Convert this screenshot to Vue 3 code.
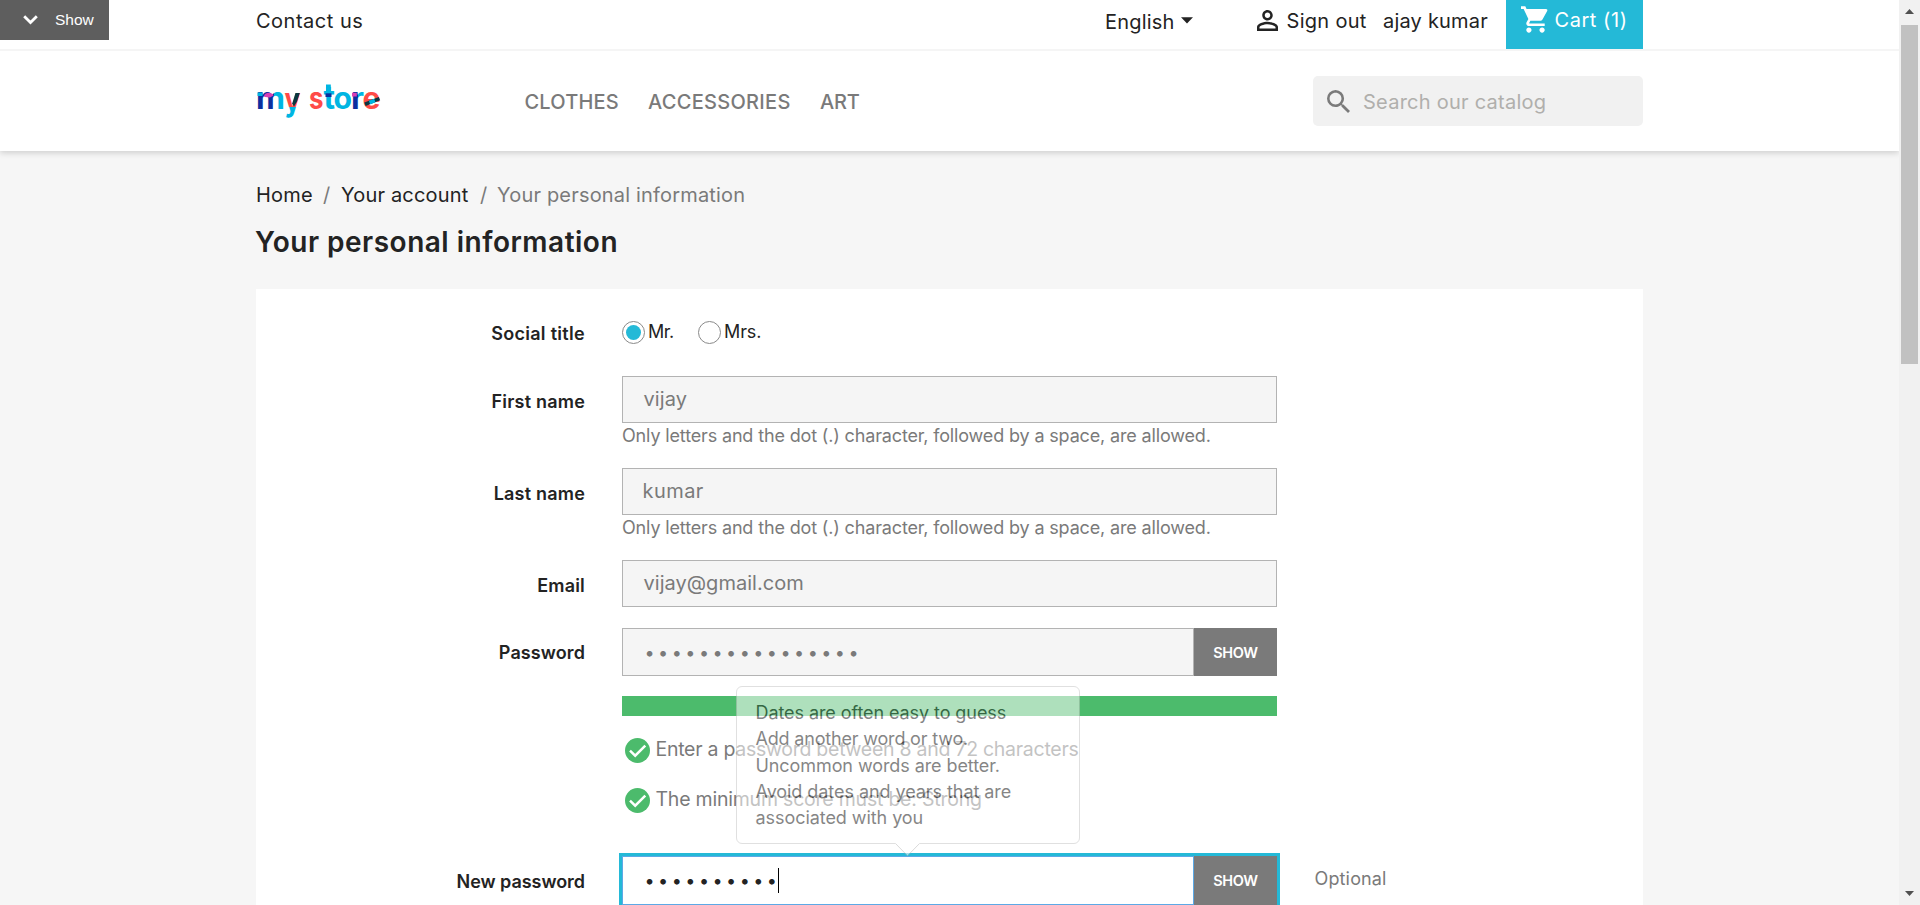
<script setup>
const nav = [
  { text: 'CLOTHES', cls: 'n1' },
  { text: 'ACCESSORIES', cls: 'n2' },
  { text: 'ART', cls: 'n3' }
]
const hint = 'Only letters and the dot (.) character, followed by a space, are allowed.'
const rules = [
  { text: 'Enter a password between 8 and 72 characters', cls: 'r1' },
  { text: 'The minimum score must be: Strong', cls: 'r2' }
]
const tips = [
  { text: 'Dates are often easy to guess', cls: 'p1' },
  { text: 'Add another word or two.', cls: 'p2' },
  { text: 'Uncommon words are better.', cls: 'p1' },
  { text: 'Avoid dates and years that are', cls: 'p3' },
  { text: 'associated with you', cls: 'p3' }
]
</script>

<template>
  <div class="window">
    <div class="page">
      <div class="toggle">
        <svg width="15" height="10" viewBox="0 0 15 10"><path d="M1.2 1.2 7.5 7.5 13.8 1.2" fill="none" stroke="#fff" stroke-width="2.8" /></svg>
        <span>Show</span>
      </div>

      <header class="header">
        <div class="topbar">
          <div class="wrap topnav">
            <a class="contact">Contact us</a>
            <a class="lang">English</a>
            <svg class="caret" width="12" height="7" viewBox="0 0 12 7"><path d="M0 0.3H12L6 6.5Z" fill="#232323" /></svg>
            <svg class="person" width="21" height="21" viewBox="4 4 16 16"><path fill="#232323" d="M12 5.9c1.16 0 2.1.94 2.1 2.1s-.94 2.1-2.1 2.1S9.900 9.160 9.900 8s.94-2.100 2.100-2.100m0 9c2.970 0 6.100 1.460 6.100 2.100v1.100H5.900V17c0-.64 3.130-2.100 6.100-2.100M12 4C9.790 4 8 5.790 8 8s1.790 4 4 4 4-1.790 4-4-1.790-4-4-4zm0 9c-2.670 0-8 1.340-8 4v3h16v-3c0-2.660-5.330-4-8-4z" /></svg>
            <a class="signout">Sign out</a>
            <a class="user">ajay kumar</a>
            <div class="cart">
              <svg width="27" height="27" viewBox="1 2 20.500 20"><path fill="#fff" d="M7 18c-1.100 0-1.990.9-1.990 2S5.900 22 7 22s2-.9 2-2-.9-2-2-2zM1 2v2h2l3.600 7.590-1.350 2.450c-.16.28-.25.61-.25.96 0 1.100.9 2 2 2h12v-2H7.420c-.14 0-.25-.11-.25-.25l.03-.12.900-1.630h7.450c.75 0 1.410-.41 1.750-1.030l3.580-6.490A1 1 0 0 0 20 4H5.210l-.94-2H1zm16 16c-1.100 0-1.990.9-1.990 2s.890 2 1.990 2 2-.9 2-2-.9-2-2-2z" /></svg>
              <span>Cart (1)</span>
            </div>
          </div>
        </div>
        <div class="wrap mainbar">
          <svg class="logo" width="126" height="40" viewBox="0 0 126 40" role="img" aria-label="my store">
            <defs>
              <linearGradient id="gm" x1="0" x2="1" y1="0" y2="0">
                <stop offset=".62" stop-color="#0b2f9f" /><stop offset=".62" stop-color="#00b5e2" />
              </linearGradient>
              <linearGradient id="gy" x1="0" x2="0" y1="0" y2="1">
                <stop offset=".7" stop-color="#ff4b47" /><stop offset=".7" stop-color="#00b5e2" />
              </linearGradient>
              <linearGradient id="gr" x1="0" x2="1" y1="0" y2="0">
                <stop offset=".52" stop-color="#0b2f9f" /><stop offset=".52" stop-color="#00b5e2" />
              </linearGradient>
            </defs>
            <g class="mark">
              <text x="0" y="27" textLength="29" lengthAdjust="spacingAndGlyphs" fill="url(#gm)">m</text>
              <text class="big" x="28.500" y="28.500" textLength="16" lengthAdjust="spacingAndGlyphs" fill="url(#gy)">y</text>
              <text x="53" y="27" textLength="14.500" lengthAdjust="spacingAndGlyphs" fill="#ff4b47">s</text>
              <text class="big" x="67.500" y="27" textLength="11.500" lengthAdjust="spacingAndGlyphs" fill="#00b5e2">t</text>
              <text x="77.500" y="27" textLength="18.500" lengthAdjust="spacingAndGlyphs" fill="#00b5e2">o</text>
              <text x="95" y="27" textLength="13" lengthAdjust="spacingAndGlyphs" fill="url(#gr)">r</text>
              <text x="106.500" y="27" textLength="18" lengthAdjust="spacingAndGlyphs" fill="#ff4b47">e</text>
            </g>
            <path d="M8 14.500C8 10 16 9.500 17.500 13.500L14 15.500 9 15z" fill="#d93fb5" />
            <path d="M1.500 10.500h5v3.500h-5z" fill="#00b5e2" />
            <path d="M39.500 11h4.300L41 19.500 38 24.500 36.200 21.500z" fill="#0a3640" />
            <path d="M70 2.500h4.800v8h-4.800z" fill="#00b5e2" />
            <path d="M69.500 11.300h6v3.700h-6z" fill="#0b2f9f" />
            <path d="M96 10.800h4.800v3.700H96z" fill="#d93fb5" />
            <path d="M109 22.300 123.500 16.600" stroke="#0a3640" stroke-width="3.600" />
            <path d="M113.500 20.500 118.800 18.500" stroke="#00b5e2" stroke-width="3.600" />
          </svg>
          <nav class="menu"><a v-for="n in nav" :key="n.text" :class="n.cls">{{ n.text }}</a></nav>
          <div class="search">
            <svg width="23" height="23" viewBox="3 3 17.500 17.500"><path fill="#7a7a7a" d="M15.500 14h-.79l-.28-.27A6.471 6.471 0 0 0 16 9.500 6.500 6.500 0 1 0 9.500 16c1.610 0 3.090-.59 4.230-1.570l.27.28v.79l5 4.990L20.490 19l-4.990-5zm-6 0C7.010 14 5 11.990 5 9.500S7.010 5 9.500 5 14 7.010 14 9.500 11.990 14 9.500 14z" /></svg>
            <span>Search our catalog</span>
          </div>
        </div>
      </header>

      <main class="wrap">
        <div class="crumbs">
          <a class="c1">Home</a><i>/</i><a class="c2">Your account</a><i class="s2">/</i><span>Your personal information</span>
        </div>
        <h1>Your personal information</h1>

        <section class="panel">
          <div class="row social">
            <label class="l1">Social title</label>
            <div class="radios">
              <span class="radio on"></span><span class="mr">Mr.</span>
              <span class="radio"></span><span class="mrs">Mrs.</span>
            </div>
          </div>
          <div class="row tall">
            <label>First name</label>
            <div class="field"><div class="input">vijay</div><p class="hint">{{ hint }}</p></div>
          </div>
          <div class="row tall">
            <label>Last name</label>
            <div class="field"><div class="input kumar">kumar</div><p class="hint">{{ hint }}</p></div>
          </div>
          <div class="row mail">
            <label>Email</label>
            <div class="field"><div class="input email">vijay@gmail.com</div></div>
          </div>
          <div class="row pass">
            <label class="l5">Password</label>
            <div class="field">
              <div class="group"><div class="input dots">••••••••••••••••</div><button class="show">SHOW</button></div>
              <div class="meter"></div>
              <div v-for="r in rules" :key="r.text" class="rule">
                <svg width="25" height="25" viewBox="0 0 25 25"><circle cx="12.500" cy="12.500" r="12.500" fill="#4cbb6c" /><path d="M5 12.700 10.200 17.700 20.300 7.700" fill="none" stroke="#fff" stroke-width="2.500" /></svg>
                <span :class="r.cls">{{ r.text }}</span>
              </div>
            </div>
          </div>
          <div class="row last">
            <label class="l6">New password</label>
            <div class="field">
              <div class="group focus">
                <div class="input dots">••••••••••<span class="cursor"></span></div><button class="show">SHOW</button>
              </div>
              <div class="popover">
                <div v-for="t in tips" :key="t.text" class="tip" :class="t.cls">{{ t.text }}</div>
                <svg class="arrow" width="25" height="14" viewBox="0 0 25 14"><path d="M0 0 12.500 12.500 25 0" fill="#fff" /><path d="M0.500 0.500 12.500 12.800 24.500 0.500" fill="none" stroke="#bdbdbd" /></svg>
              </div>
            </div>
            <span class="optional">Optional</span>
          </div>
        </section>
      </main>
    </div>

    <div class="scrollbar">
      <svg width="9" height="5" viewBox="0 0 9 5"><path d="M0 5 4.500 0 9 5Z" fill="#505050" /></svg>
      <div class="thumb"></div>
      <svg class="down" width="9" height="5" viewBox="0 0 9 5"><path d="M0 0 4.500 5 9 0Z" fill="#505050" /></svg>
    </div>
  </div>
</template>

<style>
body { margin: 0; overflow: hidden; }
</style>

<style scoped>
* { box-sizing: border-box; }
.window { display: flex; width: 1920px; height: 905px; overflow: hidden; background: #f6f6f6; font-family: Inter, "Noto Sans", sans-serif; font-weight: 400; font-size: 20px; color: #232323; white-space: nowrap; }
.page { position: relative; width: 1899px; height: 905px; overflow: hidden; }
.wrap { width: 1387px; margin-left: 256px; }
.toggle { position: absolute; left: 0; top: 0; z-index: 2; display: flex; align-items: center; width: 109px; height: 40px; padding-left: 23px; background: #5e5e5e; color: #fff; font: 400 15.500px "Liberation Sans", sans-serif; }
.toggle span { margin: -1px 0 0 17px; }

.header { height: 151px; background: #fff; box-shadow: 0 2px 6px rgba(0, 0, 0, .16); position: relative; }
.topbar { height: 51px; border-bottom: 2px solid #f5f5f5; }
.topnav { display: flex; align-items: flex-start; height: 49px; line-height: 25px; }
.contact { width: 849px; margin-top: 9px; letter-spacing: .5px; }
.lang { width: 76px; margin-top: 10px; letter-spacing: .2px; }
.caret { margin-top: 17px; }
.person { margin: 9.500px 9px 0 63.500px; }
.signout { width: 96.500px; margin-top: 9px; letter-spacing: .3px; }
.user { width: 122.500px; margin-top: 9px; letter-spacing: .2px; }
.cart { display: flex; width: 137px; height: 49px; padding: 6px 0 0 15px; background: #24b9d7; color: #fff; letter-spacing: .55px; }
.cart span { margin-left: 7px; line-height: 28px; }
.mainbar { display: flex; height: 100px; align-items: flex-start; }
.logo { margin-top: 31px; flex: none; overflow: visible; }
.mark text { font: 700 30px Inter, sans-serif; }
.mark .big { font-size: 32px; }
.menu { display: flex; width: 931px; padding-left: 142.500px; margin-top: 38px; line-height: 26px; font-weight: 500; color: #7a7a7a; }
.n1 { width: 123.500px; letter-spacing: .2px; }
.n2 { width: 172px; letter-spacing: .3px; }
.n3 { letter-spacing: -.15px; }
.search { display: flex; align-items: center; width: 330px; height: 50px; margin-top: 25px; padding-left: 13.500px; border-radius: 5px; background: #f1f1f1; color: #b0afac; letter-spacing: .25px; }
.search span { margin-left: 13.500px; padding-top: 1px; }

.crumbs { display: flex; margin-top: 32px; line-height: 25px; color: #7a7a7a; letter-spacing: .18px; }
.crumbs a { color: #232323; }
.crumbs i { font-style: normal; width: 18px; }
.c1 { width: 67px; }
.c2 { width: 139px; }
.crumbs .s2 { width: 17px; }
h1 { margin: 17px 0 0 -1px; height: 64px; line-height: 35px; font-size: 28px; font-weight: 600; letter-spacing: .5px; }

.panel { height: 640px; background: #fff; }
.row { display: flex; }
.row label { width: 329px; margin: 13.500px 37px 0 0; text-align: right; font-size: 18px; font-weight: 600; line-height: 24px; letter-spacing: .2px; }
.social { height: 87px; }
.social label { margin-top: 33px; }
.row .l1 { letter-spacing: .3px; }
.row .l5 { margin-top: 12.500px; letter-spacing: .1px; }
.row .l6 { letter-spacing: -.05px; }
.tall { height: 92px; }
.mail { height: 68px; }
.pass { height: 228px; }
.radios { display: flex; height: 23px; margin-top: 32px; font-size: 18px; line-height: 23px; }
.radio { display: grid; place-items: center; width: 23px; height: 23px; border: 1px solid #8a8a8a; border-radius: 50%; }
.radio.on::after { content: ''; width: 15px; height: 15px; border-radius: 50%; background: #24b9d7; }
.radios .mr { width: 53px; padding-left: 3px; margin-top: -1px; letter-spacing: -.5px; }
.radios .mrs { padding-left: 3px; margin-top: -1px; letter-spacing: -.1px; }
.field { position: relative; width: 655px; }
.input { height: 47px; padding-left: 20.500px; border: 1px solid #b3b3b3; background: #f5f5f5; color: #7a7a7a; line-height: 45px; letter-spacing: .1px; }
.kumar { letter-spacing: .45px; padding-left: 19.500px; }
.email { letter-spacing: .03px; }
.hint { margin: 0; font-size: 18px; line-height: 25px; color: #7a7a7a; letter-spacing: -.15px; }
.group { display: flex; height: 48px; }
.group .input { display: flex; align-items: center; flex: 1; height: 100%; padding-left: 21.500px; font-size: 18px; letter-spacing: 3.470px; }
.show { width: 83px; padding: 0; border: 0; background: #7a7a7a; color: #fff; font: 600 14.500px Inter, sans-serif; letter-spacing: -.4px; }
.meter { height: 20px; margin: 20px 0 22px; background: #4cbb6c; }
.rule { display: flex; align-items: flex-start; height: 50px; padding-left: 2.500px; line-height: 25px; font-size: 19.500px; color: #7a7a7a; }
.rule span { margin-left: 6px; margin-top: -1.500px; }
.r1 { letter-spacing: -.27px; }
.r2 { letter-spacing: -.22px; }
.focus { height: 49px; outline: 3px solid #24b9d7; }
.focus .input { border-color: #5ca9e6; background: #fff; color: #232323; }
.cursor { width: 1px; height: 25px; background: #000; margin-left: -2px; }
.optional { margin-left: 37.500px; margin-top: 11px; font-size: 18px; line-height: 24px; color: #7a7a7a; letter-spacing: .15px; }
.popover { position: absolute; left: 114px; bottom: 61px; width: 344px; height: 158px; padding: 13px 0 0 18.500px; border: 1px solid #c8c8c8; border-radius: 6px; background: #fff; opacity: .55; font-size: 18px; line-height: 26.300px; }
.arrow { position: absolute; left: 158px; top: 156px; }
.p1 { letter-spacing: -.08px; }
.p2 { letter-spacing: -.18px; }
.p3 { letter-spacing: -.06px; }

.scrollbar { display: flex; flex-direction: column; align-items: center; width: 21px; height: 905px; padding: 9px 0 9px; background: #f1f1f1; }
.thumb { width: 17px; height: 339px; margin-top: 11px; background: #c1c1c1; }
.down { margin-top: auto; }
</style>
